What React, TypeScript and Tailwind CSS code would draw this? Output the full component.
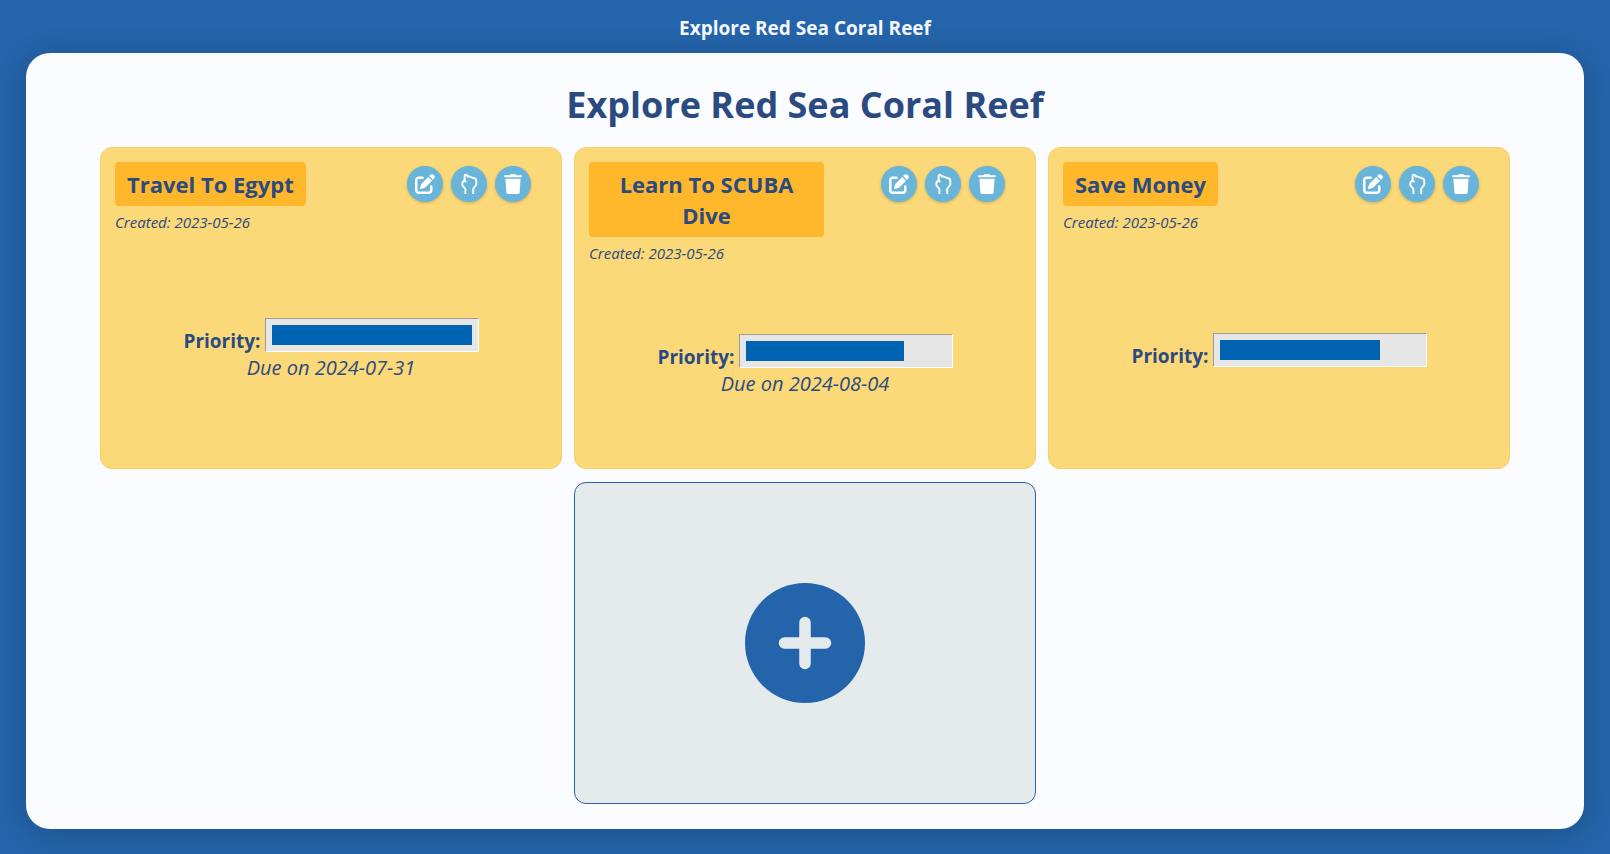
import React from "react";
import { FaPenToSquare } from "react-icons/fa6";

type Step = {
  id: string;
  title: string;
  created: string;
  due?: string;
  priority: number;
};

const steps: Step[] = [
  { id: "egypt", title: "Travel To Egypt", created: "2023-05-26", due: "2024-07-31", priority: 100 },
  { id: "scuba", title: "Learn To SCUBA Dive", created: "2023-05-26", due: "2024-08-04", priority: 79 },
  { id: "money", title: "Save Money", created: "2023-05-26", priority: 80 },
];

function PointIcon() {
  return (
    <svg
      viewBox="0 0 36 36"
      className="size-9"
      fill="none"
      stroke="currentColor"
      strokeWidth="1.9"
      strokeLinejoin="round"
      aria-hidden="true"
    >
      <path d="M14.4 28V23.2C14.4 22 11.8 20.6 11.4 19.4V16.4L13.6 14V10.2C13.6 8.6 15.6 8.2 16.4 9.8L24.2 12.6Q25.4 13.4 25.3 15V18.2C25.3 19.8 22.4 21.4 22.2 23.2V28M13.6 13.4L15 16.4M16.2 9.6L17 11.4" />
    </svg>
  );
}

function TrashIcon() {
  return (
    <svg viewBox="0 0 36 36" className="size-9" fill="currentColor" aria-hidden="true">
      <path d="M14.6 9.2L15.4 8.2H20.6L21.4 9.2H26Q27 9.2 27 10.2T26 11.3H10Q9 11.3 9 10.2T10 9.2ZM10.4 12.8H25.6L24.6 26.4Q24.5 28 23 28H13Q11.5 28 11.4 26.4Z" />
    </svg>
  );
}

function PlusIcon() {
  return (
    <svg viewBox="0 0 60 60" className="size-[60px]" stroke="currentColor" strokeWidth="11.5" strokeLinecap="round" aria-hidden="true">
      <path d="M30 9.5V50.5M9.5 30H50.5" />
    </svg>
  );
}

const roundButton =
  "flex size-9 items-center justify-center rounded-full bg-[#68b5d9] text-white shadow-[0_1px_3px_rgba(0,0,0,0.2)]";

function StepCard({ step }: { step: Step }) {
  return (
    <article className="flex h-[322px] flex-col rounded-xl border border-[#f6cf6b] bg-[#fbd878] p-3.5">
      <div className="flex items-start justify-between">
        <div className="flex max-w-[235px] flex-col items-start">
          <h2 className="rounded bg-[#ffb72b] px-3 pt-[7px] pb-1.5 text-center text-[22px] leading-[31px] font-bold">
            {step.title}
          </h2>
          <p className="mt-1 text-[15px] leading-6 italic">Created: {step.created}</p>
        </div>
        <div className="mt-1 mr-4 flex gap-2">
          <button type="button" aria-label="Edit" className={roundButton}>
            <FaPenToSquare className="size-5" />
          </button>
          <button type="button" aria-label="Promote" className={roundButton}>
            <PointIcon />
          </button>
          <button type="button" aria-label="Delete" className={roundButton}>
            <TrashIcon />
          </button>
        </div>
      </div>
      <div className="flex grow flex-col items-center justify-center pt-3">
        <div className="flex items-end gap-1">
          <label htmlFor={step.id} className="text-[19px] leading-[22px] font-bold">
            Priority:
          </label>
          <progress
            id={step.id}
            max={100}
            value={step.priority}
            className="h-[34px] w-[214px] appearance-none border border-t-[#9d9d9d] border-r-white border-b-white border-l-[#9d9d9d] bg-[#e6e6e6] p-1.5 [&::-webkit-progress-bar]:bg-[#e6e6e6] [&::-webkit-progress-value]:bg-[#0063b1]"
          />
        </div>
        {step.due && <p className="mt-0.5 text-[20px] leading-7 italic">Due on {step.due}</p>}
      </div>
    </article>
  );
}

export default function App() {
  return (
    <div className="flex min-h-screen flex-col bg-[#2464aa] px-[26px] pb-[25px] font-['Open_Sans','Noto_Sans',sans-serif] text-[#2b4a80]">
      <header className="flex h-[53px] items-center justify-center pt-1 text-[19px] font-bold text-[#f5f8fd]">
        Explore Red Sea Coral Reef
      </header>
      <main className="grow rounded-3xl bg-[#fbfcff] px-[74px] py-6 shadow-[0_4px_30px_rgba(0,0,0,0.2)]">
        <h1 className="text-center text-[36px] leading-[56px] font-bold">Explore Red Sea Coral Reef</h1>
        <div className="mt-3.5 grid grid-cols-3 gap-x-3 gap-y-[13px]">
          {steps.map((step) => (
            <StepCard key={step.id} step={step} />
          ))}
          <div className="col-start-2 flex h-[322px] items-center justify-center rounded-xl border border-[#2464aa] bg-[#e5ebed]">
            <button
              type="button"
              aria-label="Add step"
              className="flex size-[120px] items-center justify-center rounded-full bg-[#2464aa] text-[#e5ebed]"
            >
              <PlusIcon />
            </button>
          </div>
        </div>
      </main>
    </div>
  );
}
